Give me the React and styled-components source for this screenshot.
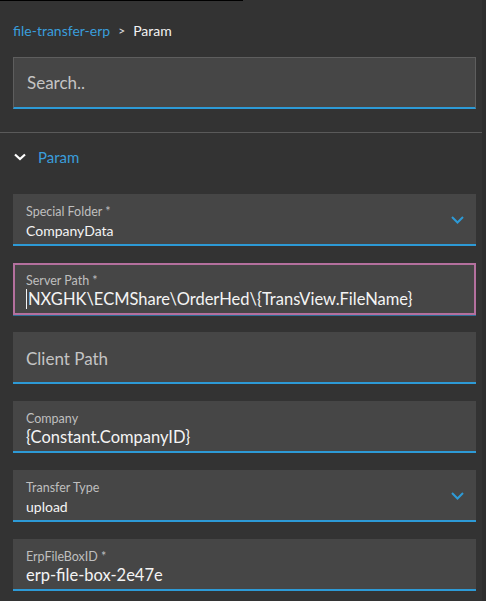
import React from 'react';
import styled, { createGlobalStyle } from 'styled-components';

const GlobalStyle = createGlobalStyle`
  html, body {
    margin: 0;
    padding: 0;
    background: #333333;
  }
  body {
    font-family: Lato, "Noto Sans", sans-serif;
    color: #f0f0f0;
  }
`;

const Page = styled.div`
  position: relative;
  width: 486px;
  height: 601px;
  overflow: hidden;
  background: #333333;
`;

const TopLine = styled.div`
  width: 243px;
  height: 1px;
  background: #000;
`;

const Scrollbar = styled.div`
  position: absolute;
  top: 0;
  right: 0;
  width: 4px;
  height: 100%;
  background: #2e2e2e;
`;

const Breadcrumb = styled.div`
  display: flex;
  align-items: center;
  gap: 8px;
  height: 20px;
  margin: 19px 0 0 13px;
  font-size: 14px;
`;

const Crumb = styled.span`
  color: ${p => (p.$active ? '#3a9ddb' : '#f2f2f2')};
`;

const Sep = styled.span`
  color: #e0e0e0;
  font-size: 12px;
`;

const Search = styled.div`
  display: flex;
  align-items: center;
  box-sizing: border-box;
  height: 52px;
  margin: 17px 10px 0 13px;
  padding-left: 13px;
  background: #464646;
  border: 1px solid #5e5e5e;
  border-bottom: 2px solid #2d9ad6;
  font-size: 17px;
  color: #c4c4c4;
`;

const Divider = styled.div`
  height: 1px;
  width: 482px;
  margin-top: 23px;
  background: #5a5a5a;
`;

const SectionHeader = styled.div`
  display: flex;
  align-items: center;
  gap: 12px;
  height: 20px;
  margin: 14px 0 0 14px;
  font-size: 15px;
  color: #3a9ddb;
`;

const Fields = styled.div`
  display: flex;
  flex-direction: column;
  gap: 17px;
  margin: 27px 10px 0 13px;
`;

const Field = styled.div`
  position: relative;
  box-sizing: border-box;
  height: 52px;
  padding: 9px 13px 0;
  background: #464646;
  border-bottom: 2px solid #2d9ad6;
  display: flex;
  flex-direction: column;
  justify-content: flex-start;
  ${p => p.$focused && `
    padding: 7px 11px 0;
    border: 2px solid #b4709e;
    box-shadow: 0 1px 0 #2d6f96;
  `}
  ${p => p.$empty && `
    padding-top: 3px;
    justify-content: center;
  `}
`;

const Label = styled.div`
  font-size: 12.5px;
  line-height: 17px;
  color: #bfbfbf;
`;

const Value = styled.div`
  font-size: ${p => (p.$small ? '14px' : '16.5px')};
  line-height: ${p => (p.$small ? '20px' : '22px')};
  margin-top: ${p => (p.$small ? '1px' : '-1px')};
  color: #f4f4f4;
  white-space: nowrap;
`;

const Placeholder = styled.div`
  font-size: 17px;
  color: #c4c4c4;
`;

const Caret = styled.span`
  display: inline-block;
  width: 1px;
  height: 20px;
  margin-right: 1px;
  vertical-align: -4px;
  background: #f4f4f4;
`;

const SelectIcon = styled.svg`
  position: absolute;
  right: 12px;
  top: 22px;
`;

const Chevron = ({ color = '#2d9ad6' }) => (
  <SelectIcon width="13" height="8" viewBox="0 0 13 8">
    <path d="M1 1 L6.5 6.5 L12 1" fill="none" stroke={color} strokeWidth="2" />
  </SelectIcon>
);

const fields = [
  { label: 'Special Folder *', value: 'CompanyData', select: true },
  { label: 'Server Path *', value: 'NXGHK\\ECMShare\\OrderHed\\{TransView.FileName}', focused: true },
  { placeholder: 'Client Path' },
  { label: 'Company', value: '{Constant.CompanyID}' },
  { label: 'Transfer Type', value: 'upload', select: true },
  { label: 'ErpFileBoxID *', value: 'erp-file-box-2e47e' },
];

export default function App() {
  return (
    <Page>
      <GlobalStyle />
      <TopLine />
      <Breadcrumb>
        <Crumb $active>file-transfer-erp</Crumb>
        <Sep>&gt;</Sep>
        <Crumb>Param</Crumb>
      </Breadcrumb>
      <Search>Search..</Search>
      <Divider />
      <SectionHeader>
        <svg width="12" height="8" viewBox="0 0 12 8">
          <path d="M1 1.5 L6 6 L11 1.5" fill="none" stroke="#ffffff" strokeWidth="2.2" />
        </svg>
        Param
      </SectionHeader>
      <Fields>
        {fields.map((f, i) =>
          f.placeholder ? (
            <Field key={i} $empty>
              <Placeholder>{f.placeholder}</Placeholder>
            </Field>
          ) : (
            <Field key={i} $focused={f.focused}>
              <Label>{f.label}</Label>
              <Value $small={f.select}>
                {f.focused && <Caret />}
                {f.value}
              </Value>
              {f.select && <Chevron />}
            </Field>
          )
        )}
      </Fields>
      <Scrollbar />
    </Page>
  );
}
